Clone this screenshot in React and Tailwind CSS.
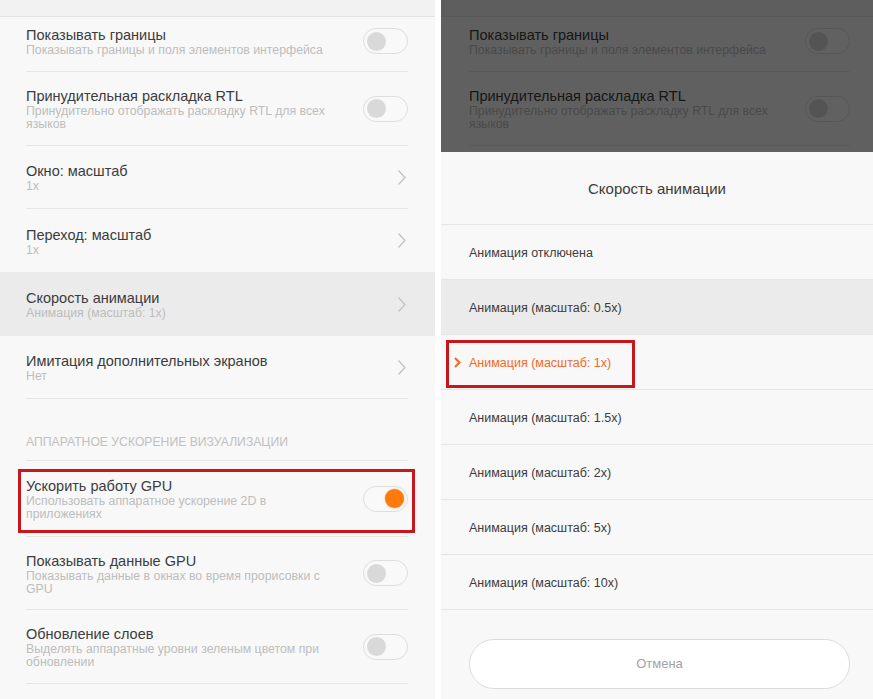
import React from "react";

const FONT = "font-['Liberation_Sans','Roboto',sans-serif]";

function Toggle({ on }) {
  return (
    <div className="relative h-[26px] w-[45px] shrink-0 rounded-full border border-[#dedede] bg-[#f9f9f9]">
      {on ? (
        <div className="absolute right-[3px] top-[2.5px] h-[19px] w-[19px] rounded-full bg-[#ff7a0d] shadow-[0_0_2px_rgba(255,122,13,0.6)]" />
      ) : (
        <div className="absolute left-[3px] top-[2.5px] h-[19px] w-[19px] rounded-full bg-[#d9d9d9]" />
      )}
    </div>
  );
}

function Chevron() {
  return (
    <svg width="10" height="17" viewBox="0 0 10 17" className="mr-[1px] shrink-0">
      <path d="M1.5 1.5 L8 8.5 L1.5 15.5" fill="none" stroke="#c2c2c2" strokeWidth="1.3" />
    </svg>
  );
}

function Row({ title, sub = [], right, h, pad, divider = true, bg = "", shift = "" }) {
  return (
    <div className={`${h} ${bg} ${pad} shrink-0`}>
      <div className={`flex h-full items-center ${shift} ${divider ? "border-b border-[#e5e5e5]" : ""}`}>
        <div className="min-w-0 flex-1 pt-[1px]">
          <div className="whitespace-nowrap text-[14.5px] leading-[18px] text-[#3c3c3c]">{title}</div>
          {sub.map((s) => (
            <div key={s} className="whitespace-nowrap text-[12.3px] leading-[13px] text-[#bdbdbd]">
              {s}
            </div>
          ))}
        </div>
        {right}
      </div>
    </div>
  );
}

function TopRows({ pad }) {
  return (
    <>
      <div className="h-[17px] shrink-0 border-b border-[#e2e2e2] bg-[#f2f2f2]" />
      <Row
        h="h-[55px]"
        pad={pad}
        shift="pb-[6px]"
        title="Показывать границы"
        sub={["Показывать границы и поля элементов интерфейса"]}
        right={<Toggle />}
      />
      <Row
        h="h-[74px]"
        pad={pad}
        title="Принудительная раскладка RTL"
        sub={["Принудительно отображать раскладку RTL для всех", "языков"]}
        right={<Toggle />}
      />
    </>
  );
}

const OPTIONS = [
  "Анимация отключена",
  "Анимация (масштаб: 0.5x)",
  "Анимация (масштаб: 1x)",
  "Анимация (масштаб: 1.5x)",
  "Анимация (масштаб: 2x)",
  "Анимация (масштаб: 5x)",
  "Анимация (масштаб: 10x)",
];

export default function App() {
  const LP = "pl-[26px] pr-[27px]";
  return (
    <div className={`flex h-[699px] w-[873px] overflow-hidden bg-white ${FONT}`}>
      {/* left screen */}
      <div className="flex h-full w-[435px] shrink-0 flex-col bg-[#f8f8f8]">
        <TopRows pad={LP} />
        <Row h="h-[63px]" pad={LP} title="Окно: масштаб" sub={["1x"]} right={<Chevron />} />
        <Row h="h-[63px]" pad={LP} divider={false} title="Переход: масштаб" sub={["1x"]} right={<Chevron />} />
        <Row
          h="h-[64px]"
          pad={LP}
          bg="bg-[#ebebeb]"
          divider={false}
          title="Скорость анимации"
          sub={["Анимация (масштаб: 1x)"]}
          right={<Chevron />}
        />
        <Row h="h-[63px]" pad={LP} title="Имитация дополнительных экранов" sub={["Нет"]} right={<Chevron />} />
        <div className={`h-[62px] shrink-0 ${LP}`}>
          <div className="flex h-full items-end border-b border-[#e5e5e5] pb-[10px] text-[12.2px] leading-[16px] text-[#c0c0c0]">
            АППАРАТНОЕ УСКОРЕНИЕ ВИЗУАЛИЗАЦИИ
          </div>
        </div>
        <div className="relative shrink-0">
          <Row
            h="h-[76px]"
            pad={LP}
            title="Ускорить работу GPU"
            sub={["Использовать аппаратное ускорение 2D в", "приложениях"]}
            right={<Toggle on />}
          />
          <div className="absolute left-[18px] top-[8px] h-[64px] w-[397px] border-[3px] border-[#c8161d]" />
        </div>
        <Row
          h="h-[73px]"
          pad={LP}
          title="Показывать данные GPU"
          sub={["Показывать данные в окнах во время прорисовки с", "GPU"]}
          right={<Toggle />}
        />
        <Row
          h="h-[74px]"
          pad={LP}
          title="Обновление слоев"
          sub={["Выделять аппаратные уровни зеленым цветом при", "обновлении"]}
          right={<Toggle />}
        />
      </div>

      <div className="w-[6px] shrink-0 bg-white" />

      {/* right screen */}
      <div className="flex h-full w-[432px] shrink-0 flex-col bg-[#f8f8f8]">
        <div className="relative flex h-[152px] shrink-0 flex-col overflow-hidden">
          <TopRows pad="pl-[28px] pr-[23px]" />
          <div className="absolute inset-0 bg-black/[0.61]" />
        </div>
        <div className="flex flex-1 flex-col bg-[#f8f8f8]">
          <div className="flex h-[73px] shrink-0 items-center justify-center border-b border-[#e5e5e5] pt-[2px] text-[15px] text-[#3c3c3c]">
            Скорость анимации
          </div>
          {OPTIONS.map((o, i) => (
            <div
              key={o}
              className={`relative flex h-[55px] shrink-0 items-center border-b border-[#e5e5e5] pl-[28px] pt-[2px] text-[12.5px] ${
                i === 1 ? "bg-[#ebebeb]" : ""
              } ${i === 2 ? "text-[#f06a24]" : "text-[#3c3c3c]"}`}
            >
              {i === 2 && (
                <>
                  <svg width="7" height="11" viewBox="0 0 7 11" className="absolute left-[13px] top-[22px]">
                    <path d="M1 1 L5.5 5.5 L1 10" fill="none" stroke="#f06a24" strokeWidth="2" />
                  </svg>
                  <div className="absolute left-[5px] top-[5px] h-[48px] w-[189px] border-[3px] border-[#c8161d]" />
                </>
              )}
              {o}
            </div>
          ))}
          <div className="px-[23px] pl-[28px] pt-[29px]">
            <div className="flex h-[50px] items-center justify-center rounded-full border border-[#dcdcdc] bg-white text-[13px] text-[#a3a3a3]">
              Отмена
            </div>
          </div>
        </div>
      </div>
    </div>
  );
}
